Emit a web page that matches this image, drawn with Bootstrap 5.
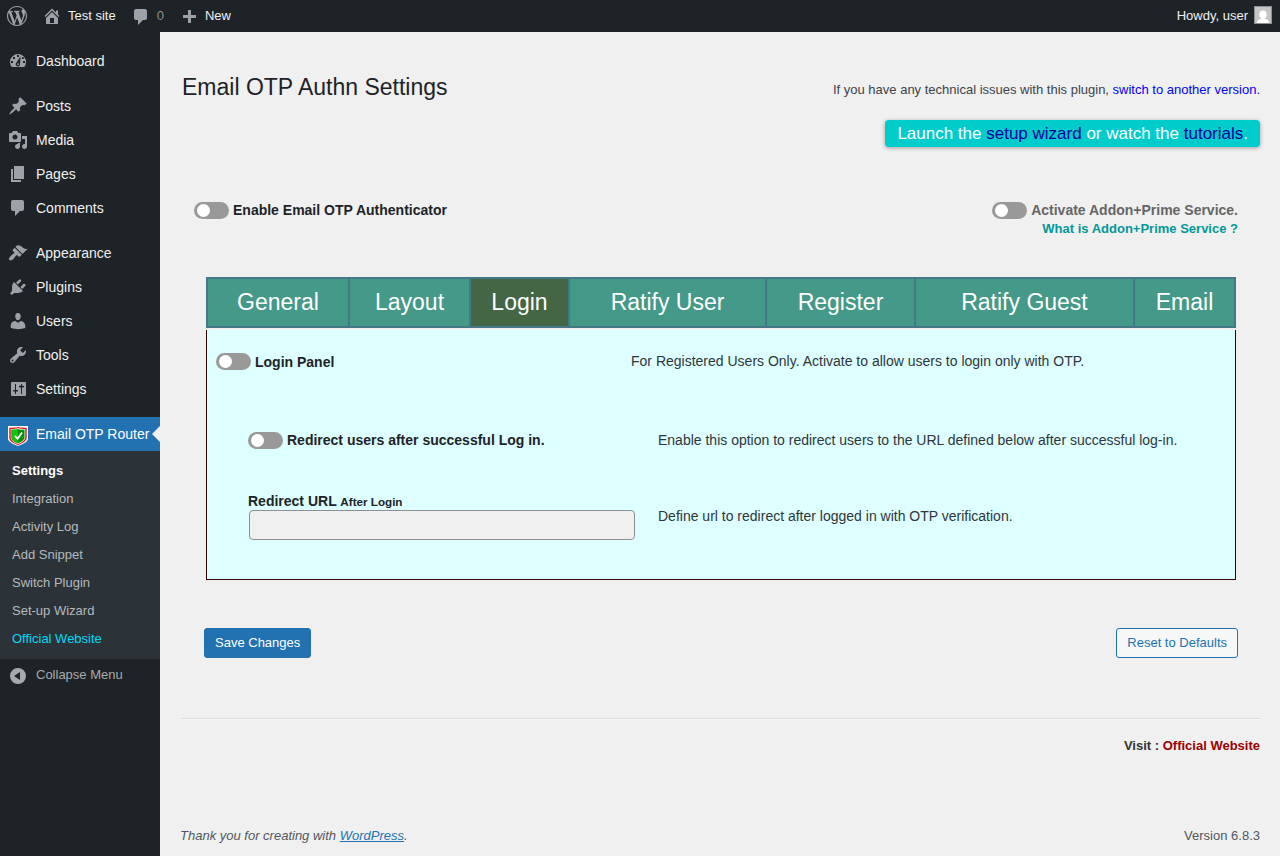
<!DOCTYPE html>
<html lang="en">
<head>
<meta charset="utf-8">
<meta name="viewport" content="width=device-width, initial-scale=1">
<title>Email OTP Authn Settings</title>
<link href="https://cdn.jsdelivr.net/npm/bootstrap@5.3.0/dist/css/bootstrap.min.css" rel="stylesheet">
<style>
body{font:13px/1.4 "Liberation Sans",Arial,sans-serif;background:#f0f0f0;color:#3c434a;height:856px;overflow:hidden}
a{text-decoration:none}
.ico{width:20px;height:20px;fill:#9ca2a7;flex:none;display:block}
.topbar{height:32px;background:#1d2327;color:#f0f0f1;line-height:32px;padding:0 8px 0 7px}
.topbar a{color:#f0f0f1;gap:6px}
.topbar .bar-item{margin-left:15px}
.topbar .count{color:#8c8f94}
.avatar-box{width:18px;height:18px;flex:none;display:block;margin-top:-2px}
.sidebar{width:160px;background:#1d2327;padding-top:12px;flex:none}
.sidebar .nav-link{height:34px;padding:0 0 0 8px;gap:8px;color:#f0f0f1;font-size:14px;line-height:34px;white-space:nowrap}
.gap-above{margin-top:11px}
.sidebar .nav-link.active{background:#2271b1;color:#fff}
.sidebar .nav-link.active::after{content:"";position:absolute;right:0;top:9px;border:8px solid transparent;border-right-color:#f0f0f0;border-left:0}
.submenu{background:#2c3338;padding:6px 0 6px 12px;height:208px}
.submenu a{display:block;height:28px;line-height:27px;color:#b4b9be}
.submenu a.current{color:#fff;font-weight:700}
.submenu a.site{color:#00d9f5}
.sidebar .nav-link.fold{color:#a7aaad;font-size:13px;line-height:32px}
.fold span{margin-top:-2px}
.content{padding:39px 20px 0 22px;min-width:0}
h1{font-size:23px;font-weight:400;line-height:32px;color:#1d2327;margin:0}
.launch{background:#0cc;color:#fff;font-size:17px;line-height:27px;height:27px;padding:0 12px;border-radius:4px;box-shadow:0 1px 4px rgba(0,0,0,.35)}
.launch a{color:#009}
.toggle{width:35px;height:17px;border-radius:9px;background:#999;padding:2px 3px;flex:none;display:block}
.toggle::before{content:"";display:block;width:13px;height:13px;border-radius:50%;background:#fff}
.opt{gap:4px;font-size:14px;font-weight:700;line-height:17px;color:#1d2327}
.tabs{display:grid;grid-template-columns:142px 121px 99px 197px 149px 219px 103px;height:51px;margin:40px 24px 0;border:solid #478;border-width:2px 0}
.tabs a{border-left:2px solid #478;background:#498;color:#fff;font-size:23px;line-height:46px;text-align:center}
.tabs a:last-child{border-right:2px solid #478}
.tabs a.on{background:#464}
.panel{margin:2px 24px 0;height:250px;background:#dff;border:1px solid #300;border-top:0;padding:23px 0 0 9px;font-size:14px;line-height:17px;color:#2f363b}
.panel-row{display:grid}
.lead-row{grid-template-columns:415px 1fr}
.lead-row .opt{line-height:19px;height:17px}
.indent{padding-left:32px;grid-template-columns:410px 1fr}
.url-label{height:17px;color:#1d2327}
.url-input{width:386px;height:30px;margin-left:1px;border:1px solid #8c8f94;border-radius:4px;background:#f0f0f0;padding:0 8px}
.wbtn{height:30px;line-height:28px;font-size:13px;padding:0 10px;border-radius:3px}
.wbtn-main{background:#2271b1;border:1px solid #2271b1;color:#fff}
.wbtn-alt{background:#f6f7f7;border:1px solid #2271b1;color:#2271b1}
.rule{height:2px;background:#dcdcde;border-bottom:1px solid #f6f7f7;margin-top:60px}
.foot{margin:72px 0 0 -2px;color:#50575e}
.foot a{color:#2271b1;text-decoration:underline}
</style>
</head>
<body>
<header class="topbar d-flex align-items-center">
  <svg class="ico" viewBox="0 0 20 20"><path d="M20 10c0-5.51-4.49-10-10-10C4.48 0 0 4.49 0 10c0 5.52 4.48 10 10 10 5.51 0 10-4.48 10-10zM7.78 15.37L4.37 6.22c.55-.02 1.17-.08 1.17-.08.5-.06.44-1.13-.06-1.11 0 0-1.45.11-2.37.11-.18 0-.37 0-.58-.01C4.12 2.69 6.87 1.11 10 1.11c2.33 0 4.45.87 6.05 2.34-.68-.11-1.65.39-1.65 1.58 0 .74.45 1.36.9 2.1.35.61.55 1.36.55 2.46 0 1.49-1.4 5-1.4 5l-3.03-8.37c.54-.02.82-.17.82-.17.5-.05.44-1.25-.06-1.22 0 0-1.44.12-2.38.12-.87 0-2.33-.12-2.33-.12-.5-.03-.56 1.2-.06 1.22l.92.08 1.26 3.41zM17.41 10c.24-.64.74-1.87.43-4.25.7 1.29 1.05 2.71 1.05 4.25 0 3.29-1.73 6.24-4.4 7.78.97-2.59 1.94-5.2 2.92-7.78zM6.1 18.09C3.12 16.65 1.11 13.53 1.11 10c0-1.3.23-2.48.72-3.59C3.25 10.3 4.67 14.2 6.1 18.09zm4.03-6.63l2.58 6.98c-.86.29-1.76.45-2.71.45-.79 0-1.57-.11-2.29-.33.81-2.38 1.62-4.74 2.42-7.1z"/></svg>
  <a href="#" class="d-flex align-items-center bar-item"><svg class="ico" viewBox="0 0 20 20"><path d="M16 8.5l1.53 1.53-1.06 1.06L10 4.6l-6.47 6.49-1.06-1.06L10 2.5l4 4v-2h2v4zm-6-2.46l6 5.99V18H4v-5.97zM12 17v-5H8v5h4z"/></svg>Test site</a>
  <a href="#" class="d-flex align-items-center bar-item count"><svg class="ico" viewBox="0 0 20 20"><path d="M5 3h9a2 2 0 0 1 2 2v7a2 2 0 0 1-2 2h-2l-5 5v-5H5a2 2 0 0 1-2-2V5a2 2 0 0 1 2-2z"/></svg>0</a>
  <a href="#" class="d-flex align-items-center bar-item"><svg class="ico" viewBox="0 0 20 20"><path d="M17 9v3h-5v5H9v-5H4V9h5V4h3v5z"/></svg>New</a>
  <a href="#" class="d-flex align-items-center ms-auto">Howdy, user
    <svg class="avatar-box" viewBox="0 0 18 18"><path fill="#8c8f94" d="M0 0h18v18H0z"/><path fill="#c5c5c5" d="M1 1h16v16H1z"/><ellipse cx="9" cy="8.500" rx="3.700" ry="4" fill="#fff"/><path fill="#fff" d="M3 17c0-3 2-3.800 4.500-4.500v-2h3v2C13 13.200 15 14 15 17z"/></svg></a>
</header>
<div class="d-flex" style="height:824px">
<nav class="sidebar nav flex-column flex-nowrap">
  <a class="nav-link d-flex align-items-center" href="#"><svg class="ico" viewBox="0 0 20 20"><path fill-rule="evenodd" d="M3.760 16h12.480A8 8 0 1 0 3.760 16zM9 4h2v2H9zM5 6h2v2H5zM3 10h2v2H3zM15 10h2v2h-2zM12.700 5.200L12 12.800a2.200 2.200 0 1 1-3.700-1.100zM14 6.200h1.800V8H14zM10 12.300a.9.900 0 1 0 .1 1.800.9.900 0 0 0-.1-1.800z"/></svg>Dashboard</a>
  <a class="nav-link d-flex align-items-center gap-above" href="#"><svg class="ico" viewBox="0 0 20 20"><path d="M10.440 3.020l1.820-1.820 6.360 6.350-1.830 1.820c-1.050-.68-2.480-.57-3.410.36l-.75.75c-.92.93-1.040 2.350-.35 3.410l-1.830 1.820-2.410-2.410-2.800 2.790c-.42.42-3.380 2.710-3.800 2.290s1.860-3.390 2.280-3.810l2.790-2.790L4.100 9.360l1.830-1.820c1.050.69 2.480.57 3.400-.36l.75-.75c.93-.92 1.050-2.350.36-3.410z"/></svg>Posts</a>
  <a class="nav-link d-flex align-items-center" href="#"><svg class="ico" viewBox="0 0 20 20"><path d="M13 11V4c0-.55-.45-1-1-1h-1.670L9 1H5L3.670 3H2c-.55 0-1 .45-1 1v7c0 .55.45 1 1 1h10c.55 0 1-.45 1-1zM7 4.500c1.380 0 2.500 1.120 2.500 2.500S8.380 9.500 7 9.500 4.500 8.380 4.500 7 5.620 4.500 7 4.500zM14 6h5v10.500c0 1.380-1.120 2.500-2.500 2.500S14 17.880 14 16.500s1.120-2.500 2.500-2.500c.17 0 .34.020.5.050V9h-3V6zm-4 8.050V13h2v3.500c0 1.380-1.120 2.500-2.500 2.500S7 17.880 7 16.500 8.120 14 9.500 14c.17 0 .34.020.5.050z"/></svg>Media</a>
  <a class="nav-link d-flex align-items-center" href="#"><svg class="ico" viewBox="0 0 20 20"><path d="M6 15V2h10v13H6zm-1 1h8v2H3V5h2v11z"/></svg>Pages</a>
  <a class="nav-link d-flex align-items-center" href="#"><svg class="ico" viewBox="0 0 20 20"><path d="M5 2h9a2 2 0 0 1 2 2v7a2 2 0 0 1-2 2h-2l-5 5v-5H5a2 2 0 0 1-2-2V4a2 2 0 0 1 2-2z"/></svg>Comments</a>
  <a class="nav-link d-flex align-items-center gap-above" href="#"><svg class="ico" viewBox="0 0 20 20"><path d="M14.480 11.060L7.410 3.990l1.500-1.500c.5-.56 2.300-.47 3.510.32 1.210.8 1.430 1.280 2.910 2.100 1.180.64 2.450 1.260 4.450.85zm-.71.71L6.700 4.700 4.930 6.470c-.39.39-.39 1.020 0 1.410l1.060 1.060c.39.39.39 1.030 0 1.420-.6.6-1.430 1.110-2.210 1.690-.35.26-.7.53-1.010.84C1.430 14.230.4 16.080 1.400 17.070c.99 1 2.840-.03 4.180-1.360.31-.31.58-.66.85-1.020.57-.78 1.080-1.610 1.690-2.210.39-.39 1.020-.39 1.410 0l1.060 1.060c.39.39 1.020.39 1.410 0z"/></svg>Appearance</a>
  <a class="nav-link d-flex align-items-center" href="#"><svg class="ico" viewBox="0 0 20 20"><path d="M13.110 4.360L9.870 7.600 8 5.730l3.240-3.240c.35-.34 1.050-.2 1.560.32.52.51.66 1.210.31 1.550zm-8 1.770l.91-1.120 9.010 9.010-1.190.84c-.71.71-2.630 1.160-3.820 1.160H6.140L4.900 17.260c-.59.59-1.540.59-2.120 0-.59-.58-.59-1.530 0-2.120l1.240-1.240v-3.880c0-1.130.4-3.190 1.090-3.890zm7.260 3.970l3.240-3.240c.34-.35 1.040-.21 1.550.31.52.51.66 1.210.31 1.550l-3.240 3.250z"/></svg>Plugins</a>
  <a class="nav-link d-flex align-items-center" href="#"><svg class="ico" viewBox="0 0 20 20"><path d="M10 9.250c-2.270 0-2.730-3.440-2.730-3.440C7 4.020 7.820 2 9.970 2c2.160 0 2.980 2.020 2.710 3.810 0 0-.41 3.440-2.680 3.440zm0 2.570L12.720 10c2.390 0 4.520 2.330 4.520 4.530v2.490s-3.650 1.130-7.240 1.130c-3.650 0-7.240-1.130-7.240-1.130v-2.490c0-2.250 1.940-4.480 4.470-4.480z"/></svg>Users</a>
  <a class="nav-link d-flex align-items-center" href="#"><svg class="ico" viewBox="0 0 20 20"><path d="M16.680 9.770c-1.340 1.340-3.300 1.670-4.950.99l-5.410 6.520c-.99.99-2.590.99-3.580 0s-.99-2.590 0-3.570l6.520-5.420c-.68-1.650-.35-3.610.99-4.950 1.280-1.280 3.120-1.620 4.720-1.060l-2.890 2.890 2.820 2.820 2.860-2.870c.53 1.580.18 3.390-1.080 4.650zM3.810 16.210c.4.390 1.040.390 1.430 0 .4-.4.4-1.040 0-1.430-.39-.4-1.030-.4-1.430 0-.39.39-.39 1.030 0 1.430z"/></svg>Tools</a>
  <a class="nav-link d-flex align-items-center" href="#"><svg class="ico" viewBox="0 0 20 20"><path fill-rule="evenodd" d="M4 3h13a1 1 0 0 1 1 1v12a1 1 0 0 1-1 1H4a1 1 0 0 1-1-1V4a1 1 0 0 1 1-1zM7 5v6H5.700a.8.800 0 0 0 0 1.600H7V15h1v-2.400h1.300a.8.800 0 0 0 0-1.600H8V5zM13 5v1.800h-1.300a.8.800 0 0 0 0 1.600H13V15h1V8.400h1.300a.8.800 0 0 0 0-1.600H14V5z"/></svg>Settings</a>
  <a class="nav-link d-flex align-items-center gap-above active position-relative" href="#"><svg class="ico" viewBox="0 0 20 20" style="margin-top:3px"><path fill="#fff" d="M0 0h20v12.500c0 3.500-5 5.500-10 7.500-5-2-10-4-10-7.500z"/><path fill="#e0141f" d="M1.300 1.800C5 1.800 8 1.600 10 1c2 .6 5 .8 8.700.8v10c0 3.300-4 5.300-8.700 7.400-4.700-2.100-8.700-4.100-8.700-7.400z"/><path fill="#e8f5e0" d="M2.700 3.100C6 3.100 8 2.800 10 2.100c2 .7 4 1 7.300 1v8.400c0 2.800-3.300 4.700-7.300 6.600-4-1.900-7.300-3.800-7.300-6.600z"/><path fill="#07920a" d="M3.500 3.800C6.500 3.800 8.200 3.500 10 2.900c1.800.6 3.500.9 6.500.9v7.600c0 2.500-3 4.200-6.500 5.900-3.500-1.700-6.500-3.400-6.500-5.900z"/><path fill="#0fc40f" d="M10 2.900c-1.800.6-3.500.9-6.500.9v7.600c0 2.500 3 4.200 6.500 5.900z"/><path fill="none" stroke="#fff" stroke-width="1.700" d="M6.800 9.800l2.800 3L14 6.600"/></svg>Email OTP Router</a>
  <div class="submenu">
    <a href="#" class="current">Settings</a><a href="#">Integration</a><a href="#">Activity Log</a><a href="#">Add Snippet</a><a href="#">Switch Plugin</a><a href="#">Set-up Wizard</a><a href="#" class="site">Official Website</a>
  </div>
  <a class="nav-link d-flex align-items-center fold" href="#"><svg class="ico" viewBox="0 0 20 20" style="fill:#a7aaad"><path fill-rule="evenodd" d="M10 2a8 8 0 1 1 0 16 8 8 0 0 1 0-16zM12 6L6 10l6 4z"/></svg><span>Collapse Menu</span></a>
</nav>
<main class="content flex-grow-1">
  <div class="d-flex justify-content-between">
    <h1>Email OTP Authn Settings</h1>
    <div style="padding-top:10px">If you have any technical issues with this plugin, <a href="#" style="color:#00f">switch to another version.</a></div>
  </div>
  <div class="d-flex justify-content-end" style="margin-top:17px"><div class="launch">Launch the <a href="#">setup wizard</a> or watch the <a href="#">tutorials</a>.</div></div>
  <div class="d-flex justify-content-between" style="margin:55px 22px 0 12px;height:35px">
    <div class="opt d-flex"><span class="toggle"></span>Enable Email OTP Authenticator</div>
    <div class="text-end">
      <div class="opt d-flex" style="color:#666"><span class="toggle"></span>Activate Addon+Prime Service.</div>
      <a href="#" class="fw-bold d-block" style="color:#099;line-height:20px">What is Addon+Prime Service ?</a>
    </div>
  </div>
  <div class="tabs"><a href="#">General</a><a href="#">Layout</a><a href="#" class="on">Login</a><a href="#">Ratify User</a><a href="#">Register</a><a href="#">Ratify Guest</a><a href="#">Email</a></div>
  <section class="panel">
    <div class="panel-row lead-row">
      <div class="opt d-flex"><span class="toggle"></span>Login Panel</div><div>For Registered Users Only. Activate to allow users to login only with OTP.</div>
    </div>
    <div class="panel-row indent" style="margin-top:62px">
      <div class="opt d-flex"><span class="toggle"></span>Redirect users after successful Log in.</div><div>Enable this option to redirect users to the URL defined below after successful log-in.</div>
    </div>
    <div class="panel-row indent" style="margin-top:44px">
      <div><label class="fw-bold d-block url-label" for="url">Redirect URL <span style="font-size:11.670px">After Login</span></label><input id="url" class="url-input d-block mt-0" type="text" disabled></div>
      <div style="padding-top:15px">Define url to redirect after logged in with OTP verification.</div>
    </div>
  </section>
  <div class="d-flex justify-content-between" style="margin:48px 22px 0">
    <button class="wbtn wbtn-main">Save Changes</button><button class="wbtn wbtn-alt">Reset to Defaults</button>
  </div>
  <div class="rule"></div>
  <div class="text-end fw-bold" style="margin-top:17px;color:#333">Visit : <a href="#" style="color:#900">Official Website</a></div>
  <footer class="foot d-flex justify-content-between"><em>Thank you for creating with <a href="#">WordPress</a>.</em><span>Version 6.8.3</span></footer>
</main>
</div>
<script src="https://cdn.jsdelivr.net/npm/bootstrap@5.3.0/dist/js/bootstrap.bundle.min.js"></script>
</body>
</html>
